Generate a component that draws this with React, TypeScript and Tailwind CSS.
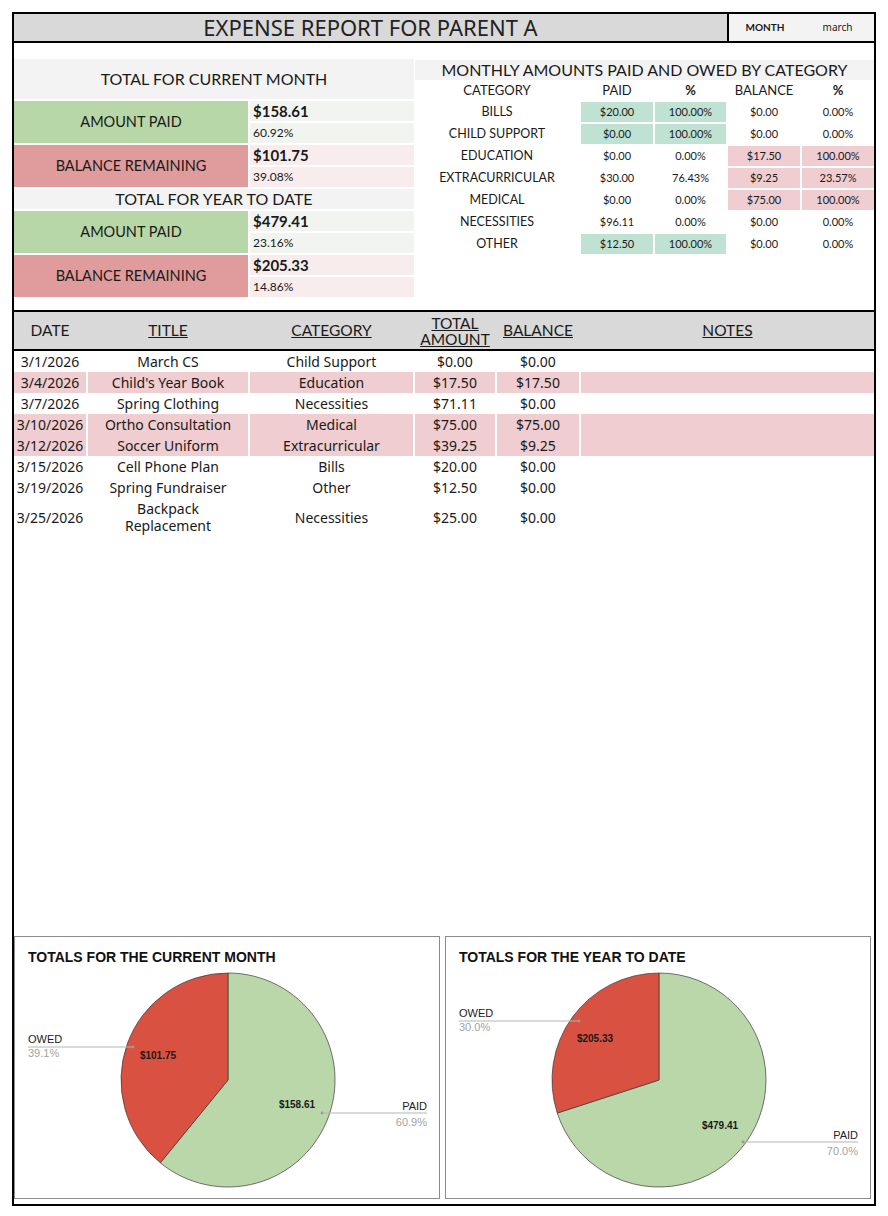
const cats = [
  { name: 'BILLS', paid: '$20.00', paidPct: '100.00%', bal: '$0.00', balPct: '0.00%', g: true, p: false },
  { name: 'CHILD SUPPORT', paid: '$0.00', paidPct: '100.00%', bal: '$0.00', balPct: '0.00%', g: true, p: false },
  { name: 'EDUCATION', paid: '$0.00', paidPct: '0.00%', bal: '$17.50', balPct: '100.00%', g: false, p: true },
  { name: 'EXTRACURRICULAR', paid: '$30.00', paidPct: '76.43%', bal: '$9.25', balPct: '23.57%', g: false, p: true },
  { name: 'MEDICAL', paid: '$0.00', paidPct: '0.00%', bal: '$75.00', balPct: '100.00%', g: false, p: true },
  { name: 'NECESSITIES', paid: '$96.11', paidPct: '0.00%', bal: '$0.00', balPct: '0.00%', g: false, p: false },
  { name: 'OTHER', paid: '$12.50', paidPct: '100.00%', bal: '$0.00', balPct: '0.00%', g: true, p: false },
];

const expenses = [
  { date: '3/1/2026', title: ['March CS'], cat: 'Child Support', total: '$0.00', bal: '$0.00', owed: false },
  { date: '3/4/2026', title: ["Child's Year Book"], cat: 'Education', total: '$17.50', bal: '$17.50', owed: true },
  { date: '3/7/2026', title: ['Spring Clothing'], cat: 'Necessities', total: '$71.11', bal: '$0.00', owed: false },
  { date: '3/10/2026', title: ['Ortho Consultation'], cat: 'Medical', total: '$75.00', bal: '$75.00', owed: true },
  { date: '3/12/2026', title: ['Soccer Uniform'], cat: 'Extracurricular', total: '$39.25', bal: '$9.25', owed: true },
  { date: '3/15/2026', title: ['Cell Phone Plan'], cat: 'Bills', total: '$20.00', bal: '$0.00', owed: false },
  { date: '3/19/2026', title: ['Spring Fundraiser'], cat: 'Other', total: '$12.50', bal: '$0.00', owed: false },
  { date: '3/25/2026', title: ['Backpack', 'Replacement'], cat: 'Necessities', total: '$25.00', bal: '$0.00', owed: false },
];

function SummaryBlock({ label, amount, pct, paid }: { label: string; amount: string; pct: string; paid: boolean }) {
  return (
    <div className="flex gap-[2px] h-[42px]">
      <div
        className={`w-[234px] flex items-center justify-center text-[14.5px] ${paid ? 'bg-[#b7d7a8]' : 'bg-[#e09c9c]'}`}
      >
        {label}
      </div>
      <div className="flex-1 flex flex-col gap-[2px]">
        <div className={`h-[20px] flex items-center pl-[3px] text-[15px] font-bold ${paid ? 'bg-[#f1f4ef]' : 'bg-[#f8ecec]'}`}>
          {amount}
        </div>
        <div className={`h-[20px] flex items-center pl-[3px] text-[12px] ${paid ? 'bg-[#f1f4ef]' : 'bg-[#f8ecec]'}`}>
          {pct}
        </div>
      </div>
    </div>
  );
}

interface PieProps {
  title: string;
  owedFrac: number;
  owedAmt: string;
  paidAmt: string;
  owedPct: string;
  paidPct: string;
  owedAmtPos: [number, number];
  paidAmtPos: [number, number];
  owedLabelY: number;
  owedLineEnd: number;
  paidLabelY: number;
  paidLineStart: number;
}

function PieChart(p: PieProps) {
  const cx = 213;
  const cy = 143;
  const r = 107;
  const a = p.owedFrac * Math.PI * 2;
  const ex = cx - r * Math.sin(a);
  const ey = cy - r * Math.cos(a);
  const red = `M ${cx} ${cy} L ${cx} ${cy - r} A ${r} ${r} 0 ${a > Math.PI ? 1 : 0} 0 ${ex} ${ey} Z`;
  const green = `M ${cx} ${cy} L ${ex} ${ey} A ${r} ${r} 0 ${a < Math.PI ? 1 : 0} 0 ${cx} ${cy - r} Z`;
  return (
    <div className="w-[426px] h-[263px] border border-[#8c8c8c] bg-white">
      <svg width="424" height="261" className="font-['Liberation_Sans',Arial,sans-serif]">
        <text x="13" y="25" fontSize="14" fontWeight="bold" fill="#111">
          {p.title}
        </text>
        <path d={green} fill="#b9d7a9" stroke="#3a3a3a" strokeWidth="0.7" />
        <path d={red} fill="#d85141" stroke="#3a3a3a" strokeWidth="0.7" />
        <text x={p.owedAmtPos[0]} y={p.owedAmtPos[1]} fontSize="10" fontWeight="bold" fill="#1a1a1a" textAnchor="middle">
          {p.owedAmt}
        </text>
        <text x={p.paidAmtPos[0]} y={p.paidAmtPos[1]} fontSize="10" fontWeight="bold" fill="#1a1a1a" textAnchor="middle">
          {p.paidAmt}
        </text>
        {/* owed leader */}
        <text x="13" y={p.owedLabelY} fontSize="11" fill="#222">OWED</text>
        <line x1="13" y1={p.owedLabelY + 4} x2={p.owedLineEnd} y2={p.owedLabelY + 4} stroke="#b5b5b5" strokeWidth="1" />
        <circle cx={p.owedLineEnd} cy={p.owedLabelY + 4} r="1.4" fill="#9a9a9a" />
        <text x="13" y={p.owedLabelY + 14} fontSize="11" fill="#a3a3a3">{p.owedPct}</text>
        {/* paid leader */}
        <text x="412" y={p.paidLabelY} fontSize="11" fill="#222" textAnchor="end">PAID</text>
        <line x1={p.paidLineStart} y1={p.paidLabelY + 3} x2="412" y2={p.paidLabelY + 3} stroke="#b5b5b5" strokeWidth="1" />
        <circle cx={p.paidLineStart} cy={p.paidLabelY + 3} r="1.4" fill="#9a9a9a" />
        <text x="412" y={p.paidLabelY + 16} fontSize="11" fill="#a3a3a3" textAnchor="end">{p.paidPct}</text>
      </svg>
    </div>
  );
}

export default function App() {
  return (
    <div className="w-[888px] h-[1216px] bg-white pt-[12px] pl-[12px] text-[#1a1a1a] font-['Lato',sans-serif]">
      <div className="w-[864px] h-[1194px] border-2 border-black flex flex-col">
        {/* Header */}
        <div className="h-[29px] shrink-0 flex border-b-2 border-black">
          <div className="w-[713px] bg-[#d9d9d9] flex items-center justify-center text-[22px] font-['Noto_Sans',sans-serif] text-[#222]">
            EXPENSE REPORT FOR PARENT A
          </div>
          <div className="flex-1 bg-[#f3f3f3] border-l-2 border-black flex items-center text-[10px]">
            <span className="w-[72px] text-center font-bold">MONTH</span>
            <span className="flex-1 text-center font-['Noto_Sans',sans-serif]">march</span>
          </div>
        </div>

        <div className="h-[16px] shrink-0" />

        {/* Summary */}
        <div className="h-[238px] shrink-0 flex">
          <div className="w-[400px] flex flex-col gap-[2px]">
            <div className="h-[40px] bg-[#f3f3f3] flex items-center justify-center text-[16px]">
              TOTAL FOR CURRENT MONTH
            </div>
            <SummaryBlock label="AMOUNT PAID" amount="$158.61" pct="60.92%" paid />
            <SummaryBlock label="BALANCE REMAINING" amount="$101.75" pct="39.08%" paid={false} />
            <div className="h-[20px] bg-[#f3f3f3] flex items-center justify-center text-[16px]">
              TOTAL FOR YEAR TO DATE
            </div>
            <SummaryBlock label="AMOUNT PAID" amount="$479.41" pct="23.16%" paid />
            <SummaryBlock label="BALANCE REMAINING" amount="$205.33" pct="14.86%" paid={false} />
          </div>

          <div className="w-[459px] ml-[1px] mt-[1px] flex flex-col">
            <div className="h-[20px] bg-[#f3f3f3] flex items-center justify-center text-[16px]">
              MONTHLY AMOUNTS PAID AND OWED BY CATEGORY
            </div>
            <div className="h-[21px] grid grid-cols-[164px_72px_71px_72px_72px] gap-x-[2px] items-center text-center text-[13px]">
              <span>CATEGORY</span>
              <span>PAID</span>
              <span className="font-bold">%</span>
              <span>BALANCE</span>
              <span className="font-bold">%</span>
            </div>
            <div className="flex flex-col gap-[2px] pt-[1px]">
              {cats.map((c) => (
                <div key={c.name} className="h-[20px] grid grid-cols-[164px_72px_71px_72px_72px] gap-x-[2px] text-center text-[11px]">
                  <span className="flex items-center justify-center text-[12.5px]">{c.name}</span>
                  <span className={`flex items-center justify-center ${c.g ? 'bg-[#c0e2d2]' : ''}`}>{c.paid}</span>
                  <span className={`flex items-center justify-center ${c.g ? 'bg-[#c0e2d2]' : ''}`}>{c.paidPct}</span>
                  <span className={`flex items-center justify-center ${c.p ? 'bg-[#efcdd0]' : ''}`}>{c.bal}</span>
                  <span className={`flex items-center justify-center ${c.p ? 'bg-[#efcdd0]' : ''}`}>{c.balPct}</span>
                </div>
              ))}
            </div>
          </div>
        </div>

        <div className="h-[13px] shrink-0" />

        {/* Expense table */}
        <div className="h-[41px] shrink-0 border-y-2 border-black bg-[#d9d9d9] grid grid-cols-[72px_160px_163px_80px_82px_293px] gap-x-[2px] items-center text-center text-[15.5px]">
          <span>DATE</span>
          <span className="underline">TITLE</span>
          <span className="underline">CATEGORY</span>
          <span className="underline leading-[16px]">
            TOTAL
            <br />
            AMOUNT
          </span>
          <span className="underline">BALANCE</span>
          <span className="underline">NOTES</span>
        </div>
        <div className="flex flex-col gap-[2px] font-['Noto_Sans',sans-serif] text-[14px]">
          {expenses.map((e) => {
            const cell = `flex items-center justify-center whitespace-nowrap ${e.owed ? 'bg-[#efcdd0]' : ''}`;
            const tall = e.title.length > 1;
            return (
              <div
                key={e.date}
                className={`grid grid-cols-[72px_160px_163px_80px_82px_293px] gap-x-[2px] text-center ${tall ? 'h-[38px]' : 'h-[19px]'}`}
              >
                <span className={cell}>{e.date}</span>
                <span className={`${cell} flex-col leading-[17px]`}>
                  {e.title.map((t) => (
                    <span key={t}>{t}</span>
                  ))}
                </span>
                <span className={cell}>{e.cat}</span>
                <span className={cell}>{e.total}</span>
                <span className={cell}>{e.bal}</span>
                <span className={cell} />
              </div>
            );
          })}
        </div>

        <div className="flex-1" />

        {/* Charts */}
        <div className="flex gap-[5px] pb-[5px] shrink-0">
          <PieChart
            title="TOTALS FOR THE CURRENT MONTH"
            owedFrac={0.391}
            owedAmt="$101.75"
            paidAmt="$158.61"
            owedPct="39.1%"
            paidPct="60.9%"
            owedAmtPos={[143, 122]}
            paidAmtPos={[282, 171]}
            owedLabelY={106}
            owedLineEnd={118}
            paidLabelY={173}
            paidLineStart={307}
          />
          <PieChart
            title="TOTALS FOR THE YEAR TO DATE"
            owedFrac={0.3}
            owedAmt="$205.33"
            paidAmt="$479.41"
            owedPct="30.0%"
            paidPct="70.0%"
            owedAmtPos={[149, 105]}
            paidAmtPos={[274, 192]}
            owedLabelY={80}
            owedLineEnd={133}
            paidLabelY={202}
            paidLineStart={297}
          />
        </div>
      </div>
    </div>
  );
}
